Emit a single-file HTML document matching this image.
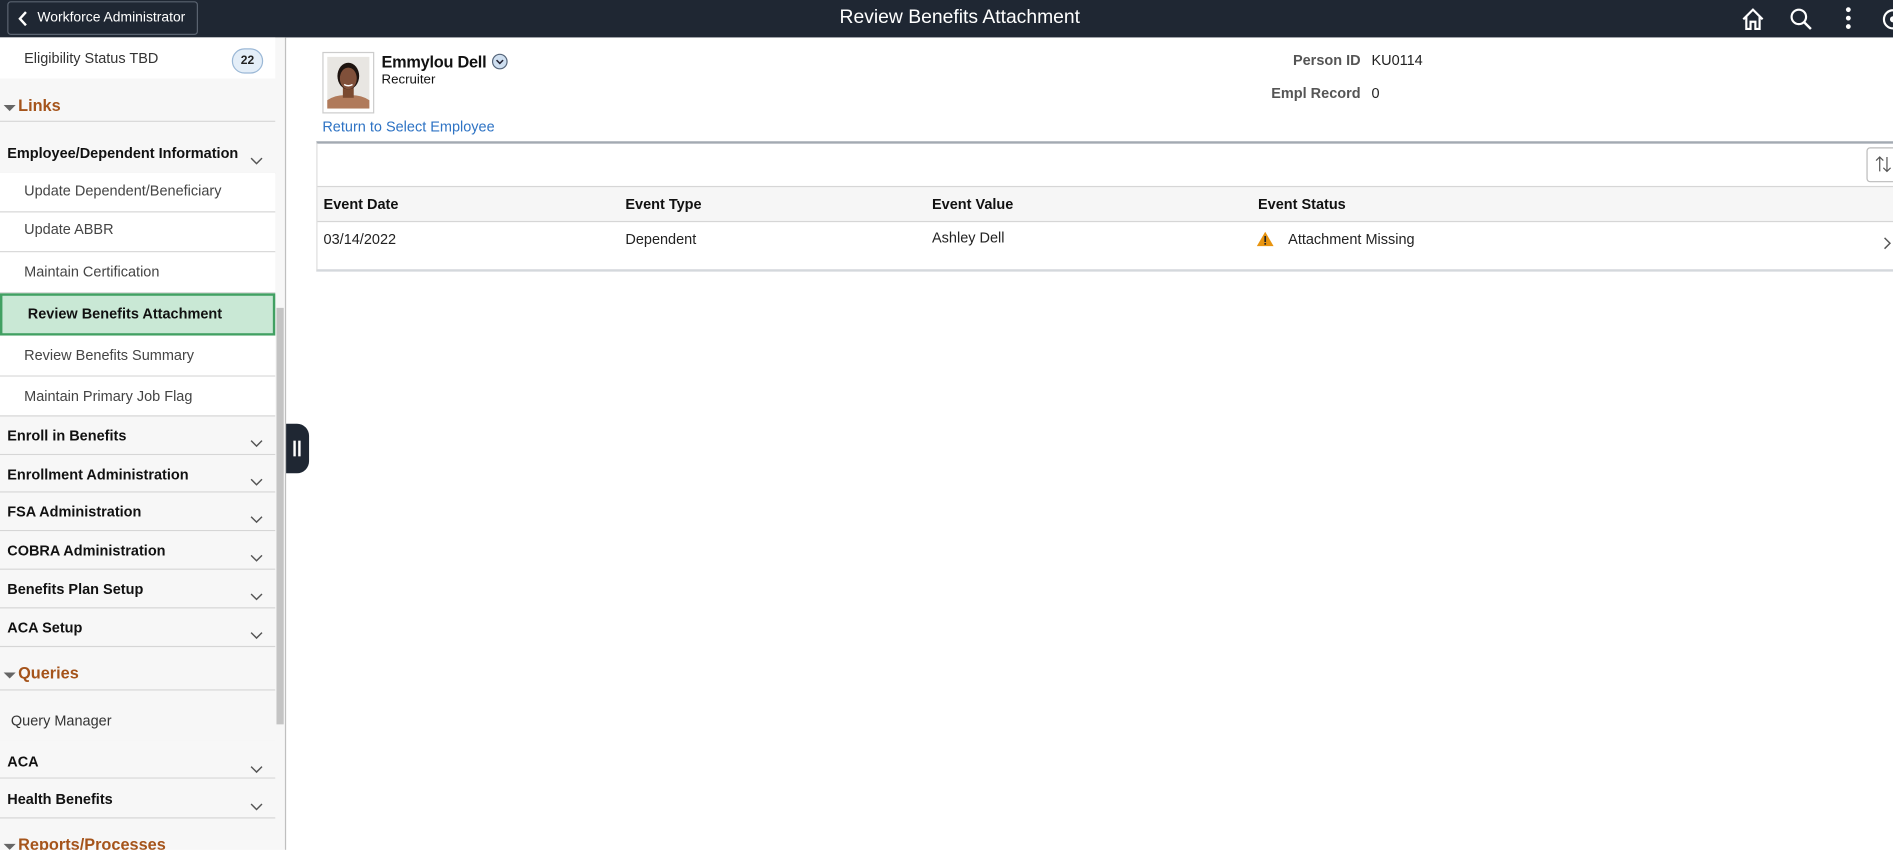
<!DOCTYPE html>
<html><head><meta charset="utf-8"><style>
*{box-sizing:border-box;margin:0;padding:0}
html,body{width:1893px;height:850px;overflow:hidden;background:#fff;font-family:"Liberation Sans",Arial,sans-serif}
#w{position:absolute;left:0;top:0;width:1568px;height:704px;transform:scale(1.20727);transform-origin:0 0;overflow:hidden}
.hdr{position:absolute;left:0;top:0;width:1568px;height:31px;background:#1f2733}
.back{position:absolute;left:6px;top:1px;width:158px;height:28px;border:1px solid #5a6370;border-radius:3px;color:#fff;font-size:11.5px;line-height:26px;padding-left:24px}
.back svg{position:absolute;left:8px;top:7px}
.title{position:absolute;left:0;width:1590px;text-align:center;top:6px;color:#fff;font-size:16px}
.ab{position:absolute}
.sb{position:absolute;left:0;top:31px;width:237px;height:673px;background:#f7f7f7;border-right:1px solid #bfbfbf}
.row{position:absolute;left:0;width:228px;border-bottom:1px solid #d6d6d6;font-size:12px;color:#444}
.sub{background:#fff;padding-left:20px}
.grp{background:#f7f7f7;font-weight:bold;color:#111;padding-left:6px}
.chev{position:absolute;right:10px}
.sec{position:absolute;left:0;width:228px;color:#a5541b;font-weight:bold;font-size:13.5px;padding-left:15px;border-bottom:1px solid #d6d6d6}
.sec:before{content:"";position:absolute;left:3px;top:7px;border:5px solid transparent;border-top:5px solid #666;border-bottom:0}
.lbl{position:absolute;font-size:12px;color:#555;font-weight:bold;text-align:right}
.th{position:absolute;top:162px;font-size:12px;font-weight:bold;color:#111}
.td{position:absolute;top:191px;font-size:12px;color:#222}
</style></head><body><div id="w">
<div class="hdr">
 <div class="back"><svg width="8" height="13" viewBox="0 0 8 13"><path d="M6.5 1 L1.5 6.5 L6.5 12" stroke="#fff" stroke-width="2" fill="none"/></svg>Workforce Administrator</div>
 <div class="title">Review Benefits Attachment</div>
 <svg class="ab" style="left:1442px;top:6px" width="20" height="20" viewBox="0 0 20 20"><path d="M2 10 L10 2 L18 10 M4.5 8 V18 H8 V12 H12 V18 H15.5 V8" stroke="#fff" stroke-width="1.8" fill="none"/></svg>
 <svg class="ab" style="left:1482px;top:6px" width="20" height="20" viewBox="0 0 20 20"><circle cx="8" cy="8" r="6" stroke="#fff" stroke-width="1.8" fill="none"/><path d="M12.5 12.5 L18 18" stroke="#fff" stroke-width="2"/></svg>
 <svg class="ab" style="left:1526px;top:5px" width="10" height="20" viewBox="0 0 10 20"><circle cx="5" cy="3" r="2" fill="#fff"/><circle cx="5" cy="10" r="2" fill="#fff"/><circle cx="5" cy="17" r="2" fill="#fff"/></svg>
 <svg class="ab" style="left:1558px;top:6px" width="20" height="20" viewBox="0 0 20 20"><circle cx="10" cy="10" r="7.5" stroke="#fff" stroke-width="1.8" fill="none"/><circle cx="10" cy="10" r="2.5" fill="#fff"/></svg>
</div>
<div class="sb">
 <div class="row sub" style="top:0;height:34px;line-height:34px;border:0;color:#333">Eligibility Status TBD<span style="position:absolute;left:192px;top:9px;width:26px;height:21px;border:1px solid #9bb8d6;border-radius:11px;background:#e4eef8;font-size:10px;font-weight:bold;text-align:center;line-height:19px;color:#222">22</span></div>
 <div class="sec" style="top:49px;height:22px;border:0">Links</div>
 <div style="position:absolute;left:0;top:69px;width:228px;border-top:1px solid #d6d6d6"></div>
</div>
<div class="row grp" style="top:101px;height:43px;padding-top:19px">Employee/Dependent Information<svg class="chev" style="top:29px" width="11" height="7" viewBox="0 0 11 7"><path d="M1 1 L5.5 5.5 L10 1" stroke="#555" fill="none" stroke-width="1.2"/></svg></div>
<div class="row sub" style="top:143px;height:33px;line-height:31px">Update Dependent/Beneficiary</div>
<div class="row sub" style="top:176px;height:33px;line-height:29px">Update ABBR</div>
<div class="row sub" style="top:209px;height:34px;line-height:32px">Maintain Certification</div>
<div class="row" style="top:243px;height:35px;line-height:31px;background:#c9e8d5;border:2px solid #41a062;padding-left:21px;font-weight:bold;color:#111">Review Benefits Attachment</div>
<div class="row sub" style="top:278px;height:34px;line-height:32px">Review Benefits Summary</div>
<div class="row sub" style="top:312px;height:33px;line-height:32px">Maintain Primary Job Flag</div>
<div class="row grp" style="top:345px;height:32px;padding-top:9px">Enroll in Benefits<svg class="chev" style="top:19px" width="11" height="7" viewBox="0 0 11 7"><path d="M1 1 L5.5 5.5 L10 1" stroke="#555" fill="none" stroke-width="1.2"/></svg></div>
<div class="row grp" style="top:377px;height:31px;padding-top:9px">Enrollment Administration<svg class="chev" style="top:19px" width="11" height="7" viewBox="0 0 11 7"><path d="M1 1 L5.5 5.5 L10 1" stroke="#555" fill="none" stroke-width="1.2"/></svg></div>
<div class="row grp" style="top:408px;height:32px;padding-top:9px">FSA Administration<svg class="chev" style="top:19px" width="11" height="7" viewBox="0 0 11 7"><path d="M1 1 L5.5 5.5 L10 1" stroke="#555" fill="none" stroke-width="1.2"/></svg></div>
<div class="row grp" style="top:440px;height:32px;padding-top:9px">COBRA Administration<svg class="chev" style="top:19px" width="11" height="7" viewBox="0 0 11 7"><path d="M1 1 L5.5 5.5 L10 1" stroke="#555" fill="none" stroke-width="1.2"/></svg></div>
<div class="row grp" style="top:472px;height:32px;padding-top:9px">Benefits Plan Setup<svg class="chev" style="top:19px" width="11" height="7" viewBox="0 0 11 7"><path d="M1 1 L5.5 5.5 L10 1" stroke="#555" fill="none" stroke-width="1.2"/></svg></div>
<div class="row grp" style="top:504px;height:32px;padding-top:9px">ACA Setup<svg class="chev" style="top:19px" width="11" height="7" viewBox="0 0 11 7"><path d="M1 1 L5.5 5.5 L10 1" stroke="#555" fill="none" stroke-width="1.2"/></svg></div>
<div class="sec" style="top:550px;height:22px">Queries</div>
<div class="row" style="top:572px;height:41px;line-height:50px;padding-left:9px;border:0;background:#f7f7f7;color:#333">Query Manager</div>
<div class="row grp" style="top:613px;height:32px;padding-top:11px">ACA<svg class="chev" style="top:21px" width="11" height="7" viewBox="0 0 11 7"><path d="M1 1 L5.5 5.5 L10 1" stroke="#555" fill="none" stroke-width="1.2"/></svg></div>
<div class="row grp" style="top:645px;height:33px;padding-top:10px">Health Benefits<svg class="chev" style="top:20px" width="11" height="7" viewBox="0 0 11 7"><path d="M1 1 L5.5 5.5 L10 1" stroke="#555" fill="none" stroke-width="1.2"/></svg></div>
<div class="sec" style="top:692px;height:22px;border:0">Reports/Processes</div>
<div class="ab" style="left:229px;top:255px;width:6px;height:345px;background:#c4c4c4"></div>
<div class="ab" style="left:237px;top:351px;width:19px;height:41px;background:#1f2733;border-radius:0 10px 10px 0"></div>
<div class="ab" style="left:243px;top:365px;width:2px;height:13px;background:#fff"></div>
<div class="ab" style="left:247px;top:365px;width:2px;height:13px;background:#fff"></div>
<div class="ab" style="left:267px;top:43px;width:43px;height:51px;border:1px solid #ccc;padding:3px;background:#fff">
<svg width="35" height="43" viewBox="0 0 35 43"><rect width="35" height="43" fill="#e8e6e2"/><path d="M0 43 V36 Q8 31 17 32 Q27 31 35 36 V43Z" fill="#b07a5a"/><rect x="13" y="24" width="9" height="10" fill="#7a4a30"/><ellipse cx="17.5" cy="16" rx="9" ry="11" fill="#1e1410"/><ellipse cx="17.5" cy="18" rx="7" ry="9" fill="#80503a"/><path d="M14 23 Q17.5 25 21 23" stroke="#fff" stroke-width="1.2" fill="none"/></svg></div>
<div class="ab" style="left:316px;top:44px;font-size:13.5px;font-weight:bold;color:#111;letter-spacing:-0.2px">Emmylou Dell</div>
<svg class="ab" style="left:407px;top:44px" width="14" height="14" viewBox="0 0 14 14"><circle cx="7" cy="7" r="6" fill="#cfdff0" stroke="#55657a"/><path d="M4.3 5.8 L7 8.5 L9.7 5.8" stroke="#223" stroke-width="1.3" fill="none"/></svg>
<div class="ab" style="left:316px;top:60px;font-size:11px;color:#111">Recruiter</div>
<div class="lbl" style="left:1000px;width:127px;top:43px">Person ID</div>
<div class="ab" style="left:1136px;top:43px;font-size:12px;color:#222">KU0114</div>
<div class="lbl" style="left:1000px;width:127px;top:70px">Empl Record</div>
<div class="ab" style="left:1136px;top:70px;font-size:12px;color:#222">0</div>
<div class="ab" style="left:267px;top:98px;font-size:12px;color:#2e73c4">Return to Select Employee</div>
<div class="ab" style="left:262px;top:117px;width:1310px;height:108px;border-top:2px solid #a3aab2;border-left:1px solid #ddd;border-bottom:2px solid #d4d8dc"></div>
<div class="ab" style="left:1546px;top:122px;width:30px;height:29px;border:1px solid #bbb;border-radius:3px;background:#fff"></div>
<svg class="ab" style="left:1552px;top:128px" width="16" height="16" viewBox="0 0 16 16"><path d="M5 14 V2 M2 5 L5 2 L8 5 M11 2 V14 M8 11 L11 14 L14 11" stroke="#555" fill="none"/></svg>
<div class="ab" style="left:263px;top:154px;width:1305px;height:30px;background:#f6f6f6;border-top:1px solid #d6d6d6;border-bottom:1px solid #d6d6d6"></div>
<div class="th" style="left:268px">Event Date</div>
<div class="th" style="left:518px">Event Type</div>
<div class="th" style="left:772px">Event Value</div>
<div class="th" style="left:1042px">Event Status</div>
<div class="td" style="left:268px">03/14/2022</div>
<div class="td" style="left:518px">Dependent</div>
<div class="td" style="left:772px;top:190px">Ashley Dell</div>
<svg class="ab" style="left:1041px;top:192px" width="14" height="12" viewBox="0 0 14 12"><path d="M7 0 L14 12 H0Z" fill="#e8940f"/><rect x="6.3" y="3.5" width="1.4" height="5" fill="#222"/><rect x="6.3" y="9.3" width="1.4" height="1.4" fill="#222"/></svg>
<div class="td" style="left:1067px">Attachment Missing</div>
<svg class="ab" style="left:1560px;top:196px" width="7" height="11" viewBox="0 0 7 11"><path d="M1 1 L5.5 5.5 L1 10" stroke="#555" fill="none" stroke-width="1.2"/></svg>
</div></body></html>
